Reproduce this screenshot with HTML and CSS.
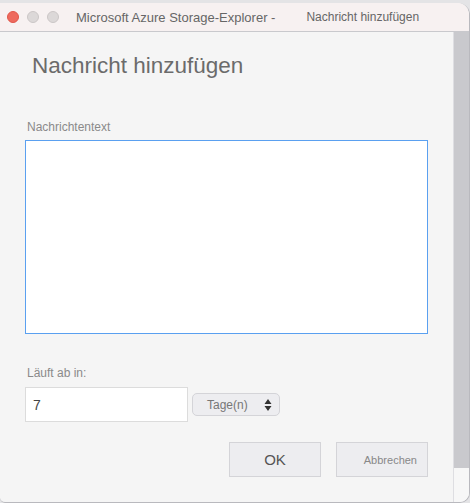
FILE: index.html
```html
<!DOCTYPE html>
<html lang="de">
<head>
    <meta charset="UTF-8">
    <meta name="viewport" content="width=device-width, initial-scale=1.0">
    <title>Nachricht hinzufügen</title>
    <link rel="stylesheet" href="styles.css">
</head>
<body>
    <div class="desk">
        <div class="window">
            <div class="titlebar">
                <span class="light red"></span>
                <span class="light"></span>
                <span class="light"></span>
                <span class="app-title">Microsoft Azure Storage-Explorer -</span>
                <span class="dlg-title">Nachricht hinzufügen</span>
            </div>
            <div class="main">
                <div class="content">
                    <h1>Nachricht hinzufügen</h1>
                    <label class="field-label" for="msgText">Nachrichtentext</label>
                    <div class="msg-box">
                        <textarea id="msgText" class="msg-text"></textarea>
                    </div>
                    <label class="field-label expiry-label" for="ttl">Läuft ab in:</label>
                    <div class="expiry-row">
                        <input id="ttl" class="ttl-input" type="text" value="7">
                        <div class="unit-select">
                            <span>Tage(n)</span>
                            <svg width="8" height="14" viewBox="0 0 8 14">
                                <path d="M4 1 L7.5 6 L0.5 6 Z M4 13 L7.5 8 L0.5 8 Z" fill="#333"/>
                            </svg>
                        </div>
                    </div>
                    <div class="actions">
                        <button class="btn btn-ok">OK</button>
                        <button class="btn btn-cancel">Abbrechen</button>
                    </div>
                </div>
                <div class="scrollbar">
                    <div class="thumb"></div>
                </div>
            </div>
        </div>
    </div>
</body>
</html>
```

FILE: styles.css
```css
body{
    margin: 0;
    font-family: "Liberation Sans", Arial, sans-serif;
    background: #e4e4e6;
}
.desk{
    width: 470px;
    height: 503px;
    padding-top: 3px;
    box-sizing: border-box;
    background: #e4e4e6;
    overflow: hidden;
}
.window{
    width: 469px;
    height: 499px;
    display: flex;
    flex-direction: column;
    background: #f5f5f5;
    border-right: 1px solid #b9b9be;
    border-bottom: 1px solid #b9b9be;
    border-top-right-radius: 12px;
    border-bottom-right-radius: 10px;
    border-bottom-left-radius: 5px;
    overflow: hidden;
}
.titlebar{
    height: 28px;
    flex-shrink: 0;
    display: flex;
    align-items: center;
    padding-left: 7px;
    background: #f7f1f1;
    border-bottom: 1px solid #c9c9cd;
    color: #666;
    font-size: 13px;
}
.light{
    width: 12px;
    height: 12px;
    border-radius: 50%;
    margin-right: 8px;
    background: #dcd8d8;
    border: 1px solid #cbc6c6;
    box-sizing: border-box;
}
.red{
    background: #ee6a5e;
    border-color: #e0564a;
}
.app-title{
    margin-left: 9px;
}
.dlg-title{
    margin-left: 31px;
    font-size: 12px;
}
.main{
    flex: 1;
    display: flex;
}
.content{
    flex: 1;
    padding: 21px 25px 0 25px;
    display: flex;
    flex-direction: column;
}
h1{
    margin: 0 0 0 7px;
    font-size: 22.5px;
    font-weight: normal;
    color: #6b6b6b;
}
.field-label{
    font-size: 12px;
    color: #8a8a8a;
    margin: 41px 0 6px 2px;
}
/* blue frame around the message field */
.msg-box{
    width: 403px;
    height: 194px;
    box-sizing: border-box;
    border: 1px solid #5aa0f0;
    background: #fff;
    display: flex;
}
.msg-text{
    flex: 1;
    border: none;
    background: transparent;
    resize: none;
    outline: none;
    margin: 0;
    padding: 4px 6px;
    font-family: inherit;
    font-size: 13px;
}
.expiry-label{
    margin-top: 32px;
}
.expiry-row{
    display: flex;
    align-items: center;
    gap: 4px;
    margin-top: 1px;
}
.ttl-input{
    width: 163px;
    height: 35px;
    box-sizing: border-box;
    border: 1px solid #dcdcdc;
    padding: 0 7px;
    font-family: inherit;
    font-size: 14px;
    color: #444;
    outline: none;
    margin: 0;
}
.unit-select{
    width: 88px;
    height: 23px;
    box-sizing: border-box;
    display: flex;
    align-items: center;
    justify-content: space-between;
    padding: 0 7px 0 14px;
    background: #ededf0;
    border: 1px solid #d4d4d8;
    border-radius: 5px;
    font-size: 12px;
    color: #777;
}
.actions{
    display: flex;
    justify-content: flex-end;
    gap: 15px;
    margin-top: 20px;
}
.btn{
    width: 92px;
    height: 35px;
    box-sizing: border-box;
    background: #ededf0;
    border: 1px solid #d4d4d8;
    font-family: inherit;
    color: #555;
    margin: 0;
}
.btn-ok{
    font-size: 15px;
}
.btn-cancel{
    font-size: 11px;
    color: #888;
    text-align: right;
    padding-right: 10px;
}
.scrollbar{
    width: 15px;
    display: flex;
    flex-direction: column;
    background: #f7f7f7;
    border-left: 1px solid #dedee2;
}
.thumb{
    height: 436px;
    background: #c9c9cd;
}
```
